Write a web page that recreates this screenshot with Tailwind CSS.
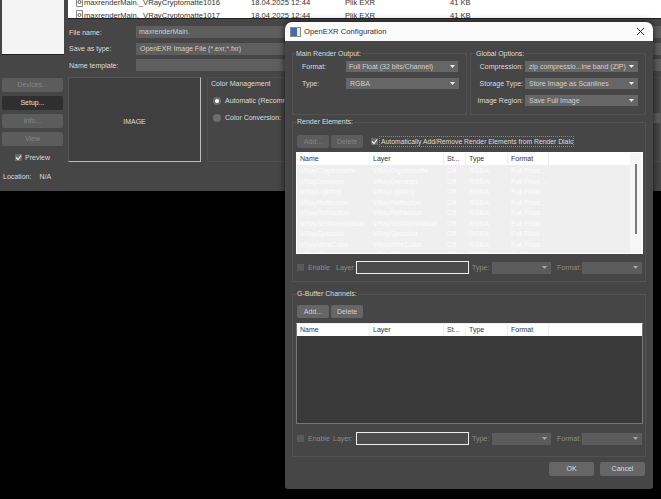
<!DOCTYPE html>
<html lang="en">

<head>
    <meta charset="UTF-8">
    <title>OpenEXR Configuration</title>
    <script src="https://cdn.jsdelivr.net/npm/@tailwindcss/browser@4"></script>
</head>

<body class="bg-black">
    <div class="relative w-[661px] h-[499px] overflow-hidden bg-black font-['Liberation_Sans',sans-serif] text-[7px] leading-[11px] text-[#dcdcdc]">

        <!-- save dialog behind -->
        <div class="flex h-[191px] bg-[#464646]">
            <div class="w-[68px] shrink-0 pl-[2px]">
                <div class="w-[62px] h-[55px] bg-[#f4f4f4] border-b border-[#222]"></div>
                <div class="flex flex-col gap-[4px] mt-[23px] w-[61px]">
                    <div class="h-[14px] rounded-[2px] bg-[#5c5c5c] text-[#878787] text-center leading-[14px]">Devices...</div>
                    <div class="h-[14px] rounded-[2px] bg-[#2f2f2f] text-[#e4e4e4] text-center leading-[14px]">Setup...</div>
                    <div class="h-[14px] rounded-[2px] bg-[#5c5c5c] text-[#878787] text-center leading-[14px]">Info...</div>
                    <div class="h-[14px] rounded-[2px] bg-[#5c5c5c] text-[#878787] text-center leading-[14px]">View</div>
                </div>
                <div class="flex items-center justify-center gap-[3px] mt-[6px] w-[61px] h-[11px]">
                    <span class="flex items-center justify-center w-[7px] h-[7px] bg-[#6a6a6a]">
                        <svg width="7" height="7" viewBox="0 0 7 7"><path d="M1 3.5 3 5.5 6 1.5" fill="none" stroke="#eee" stroke-width="1.2"/></svg>
                    </span>
                    <span>Preview</span>
                </div>
                <div class="flex gap-[8px] mt-[8px] pl-[1px] h-[11px]"><span>Location:</span><span>N/A</span></div>
            </div>
            <div class="flex-1">
                <div class="h-[19px] bg-white border-b border-[#222] text-[#333] text-[7.6px] overflow-hidden">
                    <div class="flex items-center h-[12px] -mt-[4px] pl-[7px]">
                        <svg class="w-[9px] h-[10px]" viewBox="0 0 9 10"><path d="M1.5 9.5V.5H7.5V9.5Z" fill="none" stroke="#888"/><circle cx="4.5" cy="5" r="1.5" fill="none" stroke="#555"/></svg>
                        <span class="w-[167px]">maxrenderMain._VRayCryptomatte1016</span>
                        <span class="w-[94px]">18.04.2025 12:44</span>
                        <span class="w-[105px]">Plik EXR</span>
                        <span>41 KB</span>
                    </div>
                    <div class="flex items-center h-[12px] mt-[1px] pl-[7px]">
                        <svg class="w-[9px] h-[10px]" viewBox="0 0 9 10"><path d="M1.5 9.5V.5H7.5V9.5Z" fill="none" stroke="#888"/><circle cx="4.5" cy="5" r="1.5" fill="none" stroke="#555"/></svg>
                        <span class="w-[167px]">maxrenderMain._VRayCryptomatte1017</span>
                        <span class="w-[94px]">18.04.2025 12:44</span>
                        <span class="w-[105px]">Plik EXR</span>
                        <span>41 KB</span>
                    </div>
                </div>
                <div class="flex flex-col gap-[4.5px] mt-[7px]">
                    <div class="flex items-center h-[12px]"><span class="w-[68px] pl-[1px]">File name:</span><span class="flex-1 h-[12px] pl-[3px] bg-[#5e5e5e] text-[#cfcfcf] leading-[12px]">maxrenderMain.</span></div>
                    <div class="flex items-center h-[12px]"><span class="w-[68px] pl-[1px]">Save as type:</span><span class="flex-1 h-[12px] pl-[4px] bg-[#5e5e5e] text-[#cfcfcf] leading-[12px]">OpenEXR Image File (*.exr,*.fxr)</span></div>
                    <div class="flex items-center h-[12px]"><span class="w-[68px] pl-[1px]">Name template:</span><span class="flex-1 h-[12px] bg-[#5e5e5e]"></span></div>
                </div>
                <div class="flex gap-[6px] mt-[6px]">
                    <div class="flex items-center justify-center w-[133px] h-[85px] pt-[3px] bg-[#3f3f3f] border border-[#555] border-r-[#bbb] border-b-[#bbb]">IMAGE</div>
                    <div class="flex-1 h-[85px] border border-[#505050]">
                        <div class="pl-[3px]">Color Management</div>
                        <div class="flex items-center gap-[4px] mt-[6px] pl-[5px]"><span class="flex items-center justify-center w-[8px] h-[8px] rounded-full bg-[#6d6d6d]"><span class="w-[4px] h-[4px] rounded-full bg-white"></span></span><span>Automatic (Recommended)</span></div>
                        <div class="flex items-center gap-[4px] mt-[6px] pl-[5px]"><span class="w-[8px] h-[8px] rounded-full bg-[#6d6d6d]"></span><span>Color Conversion:</span><span class="ml-auto w-[30px] h-[10px] bg-[#5e5e5e]"></span></div>
                    </div>
                </div>
            </div>
        </div>

        <!-- config window -->
        <div class="absolute left-[285px] top-[22px] w-[368px] h-[467px] rounded-t-[7px] rounded-b-[3px] bg-[#464646] shadow-[0_0_7px_rgba(0,0,0,0.75)] overflow-hidden">
            <div class="flex items-center h-[19px] bg-[#fbfbfb] text-[#333] text-[7.7px] pl-[5px]">
                <svg class="w-[11px] h-[10px] mr-[3px]" viewBox="0 0 11 10">
                    <rect x="0.5" y="0.5" width="10" height="9" fill="#e8e8e8" stroke="#8a8a8a"/>
                    <rect x="1" y="1" width="6" height="8" fill="#3f6ea8"/>
                </svg>
                <span>OpenEXR Configuration</span>
                <svg class="ml-auto mr-[8px] w-[9px] h-[9px]" viewBox="0 0 9 9"><path d="M1 1 8 8M8 1 1 8" stroke="#222" stroke-width="1"/></svg>
            </div>

            <div class="px-[7px]">
                <div class="flex gap-[3px] mt-[12px]">
                    <div class="w-[175px] h-[62px] border border-[#525252] pl-[9px] pt-[7px]">
                        <div class="-mt-[13px] -ml-[7px] mb-[2px] w-fit bg-[#464646] px-[1px]">Main Render Output:</div>
                        <div class="flex flex-col gap-[6px] mt-[1px]">
                            <div class="flex items-center h-[11px]"><span class="w-[44px]">Format:</span><span class="flex items-center justify-between w-[112px] h-[11px] bg-[#666] text-[#cfcfcf] px-[3px]">Full Float (32 bits/Channel)<svg class="w-[5px] h-[3px]" viewBox="0 0 5 3"><path d="M0 0H5L2.5 3Z" fill="#eee"/></svg></span></div>
                            <div class="flex items-center h-[11px]"><span class="w-[44px]">Type:</span><span class="flex items-center justify-between w-[113px] h-[11px] bg-[#666] text-[#cfcfcf] px-[4px]">RGBA<svg class="w-[5px] h-[3px]" viewBox="0 0 5 3"><path d="M0 0H5L2.5 3Z" fill="#eee"/></svg></span></div>
                        </div>
                    </div>
                    <div class="w-[176px] h-[62px] border border-[#525252] pl-[5px] pt-[7px]">
                        <div class="-mt-[13px] mb-[2px] -ml-[1px] w-fit bg-[#464646] px-[1px]">Global Options:</div>
                        <div class="flex flex-col gap-[6px] mt-[1px]">
                            <div class="flex items-center h-[11px]"><span class="w-[47px] mr-[1px] text-right whitespace-nowrap flex justify-end">Compression:</span><span class="flex items-center justify-between w-[113px] h-[11px] ml-[1px] bg-[#666] text-[#cfcfcf] px-[4px]">zip compressio...ine band (ZIP)<svg class="w-[5px] h-[3px]" viewBox="0 0 5 3"><path d="M0 0H5L2.5 3Z" fill="#eee"/></svg></span></div>
                            <div class="flex items-center h-[11px]"><span class="w-[47px] mr-[1px] text-right whitespace-nowrap flex justify-end">Storage Type:</span><span class="flex items-center justify-between w-[113px] h-[11px] ml-[1px] bg-[#666] text-[#cfcfcf] px-[4px]">Store Image as Scanlines<svg class="w-[5px] h-[3px]" viewBox="0 0 5 3"><path d="M0 0H5L2.5 3Z" fill="#eee"/></svg></span></div>
                            <div class="flex items-center h-[11px]"><span class="w-[47px] mr-[1px] text-right whitespace-nowrap flex justify-end">Image Region:</span><span class="flex items-center justify-between w-[113px] h-[11px] ml-[1px] bg-[#666] text-[#cfcfcf] px-[4px]">Save Full Image<svg class="w-[5px] h-[3px]" viewBox="0 0 5 3"><path d="M0 0H5L2.5 3Z" fill="#eee"/></svg></span></div>
                        </div>
                    </div>
                </div>

                <!-- render elements -->
                <div class="mt-[7px] h-[160px] border border-[#525252] px-[3px]">
                    <div class="-mt-[7px] w-fit bg-[#464646] px-[1px] h-[11px]">Render Elements:</div>
                    <div class="flex items-center h-[13px] mt-[8px] pl-[1px]">
                        <span class="w-[32px] h-[13px] rounded-[2px] bg-[#5c5c5c] text-[#858585] text-center leading-[13px]">Add...</span>
                        <span class="w-[32px] h-[13px] ml-[2px] rounded-[2px] bg-[#5c5c5c] text-[#858585] text-center leading-[13px]">Delete</span>
                        <span class="flex items-center justify-center w-[7px] h-[7px] ml-[8px] bg-[#6a6a6a]">
                            <svg width="7" height="7" viewBox="0 0 7 7"><path d="M1 3.5 3 5.5 6 1.5" fill="none" stroke="#eee" stroke-width="1.2"/></svg>
                        </span>
                        <span class="w-[195px] h-[11px] ml-[1px] pl-[1px] border border-dotted border-[#888] overflow-hidden whitespace-nowrap text-[6.8px] leading-[9px]">Automatically Add/Remove Render Elements from Render Dialog</span>
                    </div>
                    <div class="relative mt-[4px] w-[347px] h-[102px] bg-[#efefef] border border-white overflow-hidden">
                        <div class="grid grid-cols-[73px_74px_22px_42px_41px] h-[12px] bg-white text-[#333] leading-[12px]">
                            <span class="pl-[3px] border-r border-[#eee]">Name</span>
                            <span class="pl-[3px] border-r border-[#eee]">Layer</span>
                            <span class="pl-[3px] border-r border-[#eee]">St...</span>
                            <span class="pl-[3px] border-r border-[#eee]">Type</span>
                            <span class="pl-[3px] border-r border-[#eee]">Format</span>
                        </div>
                        <div id="rows" class="pt-[1px] text-[#fcfcfc]"></div>
                        <div class="absolute right-0 top-0 w-[12px] h-full bg-[#f6f6f6]">
                            <div class="mx-auto mt-[11px] w-[2px] h-[70px] bg-[#7a7a7a]"></div>
                        </div>
                    </div>
                    <div class="flex items-center h-[13px] mt-[7px] pl-[1px] text-[#8c8c8c]">
                        <span class="w-[7px] h-[7px] bg-[#5a5a5a]"></span>
                        <span class="w-[28px] ml-[4px]">Enable</span>
                        <span class="w-[20px]">Layer</span>
                        <span class="w-[113px] h-[13px] bg-[#4c4c4c] border border-[#eee]"></span>
                        <span class="w-[20px] ml-[3px]">Type:</span>
                        <span class="flex items-center justify-end w-[59px] h-[12px] bg-[#5c5c5c] pr-[4px]"><svg class="w-[5px] h-[3px]" viewBox="0 0 5 3"><path d="M0 0H5L2.5 3Z" fill="#aaa"/></svg></span>
                        <span class="w-[25px] ml-[6px]">Format:</span>
                        <span class="flex items-center justify-end w-[60px] h-[12px] bg-[#5c5c5c] pr-[4px]"><svg class="w-[5px] h-[3px]" viewBox="0 0 5 3"><path d="M0 0H5L2.5 3Z" fill="#aaa"/></svg></span>
                    </div>
                </div>

                <!-- g-buffer channels -->
                <div class="mt-[12px] h-[163px] border border-[#525252] px-[3px]">
                    <div class="-mt-[7px] w-fit bg-[#464646] px-[1px] h-[11px]">G-Buffer Channels:</div>
                    <div class="flex items-center h-[13px] mt-[6px] pl-[1px] text-[#d0d0d0]">
                        <span class="w-[32px] h-[13px] rounded-[2px] bg-[#666] text-center leading-[13px]">Add...</span>
                        <span class="w-[32px] h-[13px] ml-[2px] rounded-[2px] bg-[#666] text-center leading-[13px]">Delete</span>
                    </div>
                    <div class="mt-[5px] w-[347px] h-[101px] bg-[#393939] border border-[#777] border-t-[#eee]">
                        <div class="grid grid-cols-[73px_74px_22px_42px_41px] h-[12px] bg-white text-[#333] leading-[12px]">
                            <span class="pl-[3px] border-r border-[#eee]">Name</span>
                            <span class="pl-[3px] border-r border-[#eee]">Layer</span>
                            <span class="pl-[3px] border-r border-[#eee]">St...</span>
                            <span class="pl-[3px] border-r border-[#eee]">Type</span>
                            <span class="pl-[3px] border-r border-[#eee]">Format</span>
                        </div>
                    </div>
                    <div class="flex items-center h-[13px] mt-[8px] pl-[1px] text-[#8c8c8c]">
                        <span class="w-[7px] h-[7px] bg-[#5a5a5a]"></span>
                        <span class="w-[25px] ml-[4px]">Enable</span>
                        <span class="w-[23px]">Layer:</span>
                        <span class="w-[113px] h-[13px] bg-[#4c4c4c] border border-[#eee]"></span>
                        <span class="w-[20px] ml-[3px]">Type:</span>
                        <span class="flex items-center justify-end w-[59px] h-[12px] bg-[#5c5c5c] pr-[4px]"><svg class="w-[5px] h-[3px]" viewBox="0 0 5 3"><path d="M0 0H5L2.5 3Z" fill="#aaa"/></svg></span>
                        <span class="w-[25px] ml-[6px]">Format:</span>
                        <span class="flex items-center justify-end w-[60px] h-[12px] bg-[#5c5c5c] pr-[4px]"><svg class="w-[5px] h-[3px]" viewBox="0 0 5 3"><path d="M0 0H5L2.5 3Z" fill="#aaa"/></svg></span>
                    </div>
                </div>

                <div class="flex justify-end gap-[6px] mt-[5px] pr-[1px]">
                    <span class="w-[45px] h-[14px] rounded-[2px] bg-[#666] text-center leading-[14px]">OK</span>
                    <span class="w-[45px] h-[14px] rounded-[2px] bg-[#666] text-center leading-[14px]">Cancel</span>
                </div>
            </div>
        </div>
    </div>
    <script>
        const names = ["VRayCryptomatte", "VRayDenoiser", "VRayLighting", "VRayReflection", "VRayRefraction", "VRaySelfIllumination", "VRaySpecular", "VRayWireColor", "VRayZDepth"];
        document.getElementById("rows").innerHTML = names.map(n => `
            <div class="grid grid-cols-[73px_74px_22px_42px_41px] h-[10.5px] leading-[10.5px] whitespace-nowrap">
                <span class="pl-[3px]">${n}</span>
                <span class="pl-[3px]">${n}</span>
                <span class="pl-[3px]">Off</span>
                <span class="pl-[3px]">RGBA</span>
                <span class="pl-[3px]">Full Float ...</span>
            </div>`).join("");
    </script>
</body>

</html>
